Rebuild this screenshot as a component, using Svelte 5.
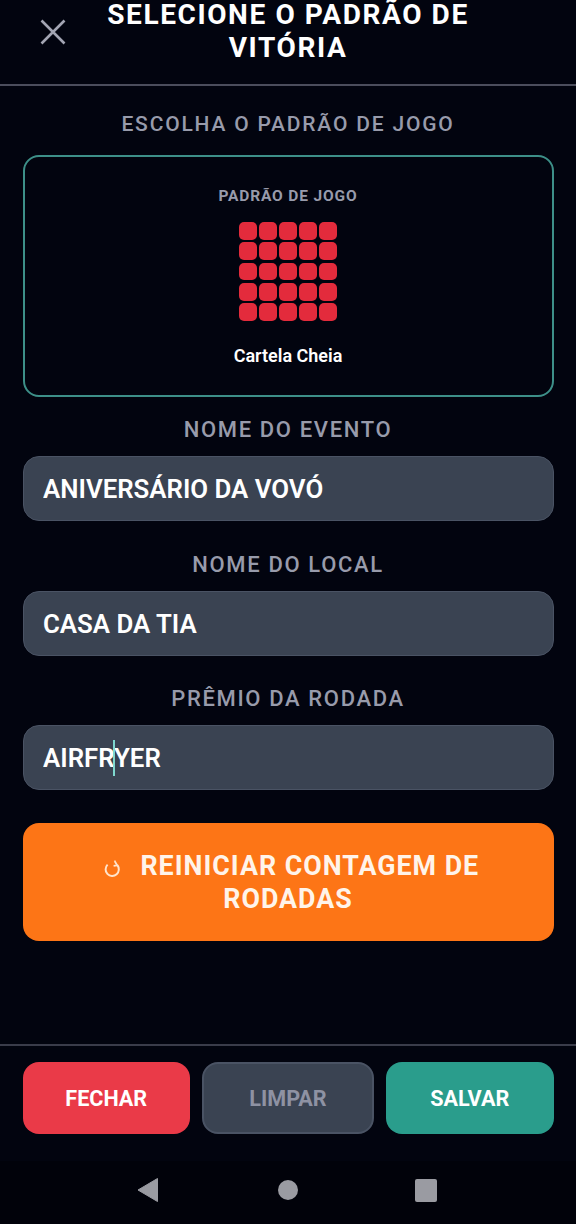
<script>
  const cells = Array.from({ length: 25 }, (_, i) => i);
  const fields = [
    { label: 'NOME DO EVENTO', value: 'ANIVERSÁRIO DA VOVÓ' },
    { label: 'NOME DO LOCAL', value: 'CASA DA TIA' },
    { label: 'PRÊMIO DA RODADA', value: 'AIRFRYER', caret: true }
  ];
</script>

<div class="screen">
  <header class="header">
    <button class="close" aria-label="Fechar">
      <svg viewBox="0 0 28 28" width="28" height="28"><path d="M2.5 2.5 25.5 25.5M25.5 2.5 2.5 25.5" fill="none" stroke="#a3a5b3" stroke-width="2.6" /></svg>
    </button>
    <h1 class="title">SELECIONE O PADRÃO DE VITÓRIA</h1>
  </header>

  <main class="content">
    <h2 class="label first">ESCOLHA O PADRÃO DE JOGO</h2>
    <section class="card">
      <div class="card-title">PADRÃO DE JOGO</div>
      <div class="grid">
        {#each cells as c (c)}<span class="cell"></span>{/each}
      </div>
      <div class="card-name">Cartela Cheia</div>
    </section>

    {#each fields as f (f.label)}
      <div class="field">
        <div class="label">{f.label}</div>
        <div class="input-wrap">
          <input class="input" value={f.value} readonly />
          {#if f.caret}<span class="caret"></span>{/if}
        </div>
      </div>
    {/each}

    <button class="reset">
      <span class="reset-text">
        <svg class="reset-icon" viewBox="0 0 18 18" width="18" height="18"><path d="M4.6 4.6A6.6 6.6 0 1 0 14.2 5" fill="none" stroke="#ffe4cc" stroke-width="2" /><path d="M11.6 1 14.2 5.4 10.6 5.9M11.6 1 12.2 1" fill="none" stroke="#ffe4cc" stroke-width="1.8" /></svg>
        REINICIAR CONTAGEM DE RODADAS
      </span>
    </button>
  </main>

  <footer class="footer">
    <button class="btn red">FECHAR</button>
    <button class="btn gray">LIMPAR</button>
    <button class="btn green">SALVAR</button>
  </footer>

  <nav class="navbar">
    <svg viewBox="0 0 22 26" width="22" height="26"><path d="M20.5 1.5V24.5L1 13Z" fill="#9a9ba2" stroke="#9a9ba2" stroke-linejoin="round" stroke-width="1" /></svg>
    <span class="dot"></span>
    <span class="square"></span>
  </nav>
</div>

<style>
  :global(body) {
    margin: 0;
    background: #02040f;
  }
  .screen {
    width: 576px;
    height: 1224px;
    overflow: hidden;
    display: flex;
    flex-direction: column;
    background: #02040f;
    font-family: Roboto, "Liberation Sans", sans-serif;
    color: #fff;
  }
  .header {
    box-sizing: border-box;
    height: 86px;
    flex: none;
    display: grid;
    grid-template-columns: 96px 1fr 96px;
    align-items: center;
    padding-bottom: 20px;
    border-bottom: 2px solid #4b4d5c;
  }
  .close {
    grid-column: 1;
    grid-row: 1;
    background: none;
    border: 0;
    padding: 0 0 0 39px;
    margin: 0;
    height: 28px;
    display: flex;
    justify-content: flex-start;
  }
  .title {
    grid-column: 2;
    margin: -2px 0 0;
    font-size: 28px;
    line-height: 33px;
    font-weight: 700;
    letter-spacing: 1.6px;
    text-align: center;
  }
  .content {
    flex: 1;
    padding: 0 22.5px;
    display: flex;
    flex-direction: column;
  }
  .label {
    margin: 0;
    font-size: 22px;
    line-height: 24px;
    font-weight: 500;
    letter-spacing: 1.65px;
    text-align: center;
    color: #989bab;
  }
  .first {
    margin-top: 26px;
    font-size: 21px;
    letter-spacing: 1.8px;
  }
  .card {
    box-sizing: border-box;
    margin-top: 19px;
    height: 242px;
    border: 2px solid #3d8f88;
    border-radius: 16px;
    display: flex;
    flex-direction: column;
    align-items: center;
    padding-top: 30px;
  }
  .card-title {
    font-size: 15.5px;
    line-height: 18px;
    font-weight: 700;
    letter-spacing: 0.85px;
    color: #989bab;
  }
  .grid {
    margin-top: 17px;
    display: grid;
    grid-template-columns: repeat(5, 1fr);
    grid-template-rows: repeat(5, 1fr);
    gap: 2.4px;
    width: 98px;
    height: 99px;
  }
  .cell {
    background: #e32b3c;
    border-radius: 5px;
  }
  .card-name {
    margin-top: 25px;
    font-size: 18px;
    line-height: 20px;
    font-weight: 600;
  }
  .field {
    margin-top: 31.5px;
    display: flex;
    flex-direction: column;
    gap: 14px;
  }
  .field:first-of-type {
    margin-top: 21px;
  }
  .input-wrap {
    position: relative;
  }
  .input {
    box-sizing: border-box;
    display: block;
    width: 100%;
    height: 65px;
    padding: 1px 19.5px 0;
    background: #3a4352;
    border: 1px solid #4a5364;
    border-radius: 16px;
    outline: none;
    color: #fff;
    font-family: inherit;
    font-size: 25.8px;
    font-weight: 600;
  }
  .caret {
    position: absolute;
    left: 90px;
    top: 15px;
    width: 2px;
    height: 36px;
    background: #7fd8cf;
  }
  .reset {
    margin-top: 33px;
    box-sizing: border-box;
    height: 118px;
    background: #fd7516;
    border: 0;
    border-radius: 16px;
    padding: 2px 48px 0;
    color: #fff4ea;
    font-family: inherit;
    font-size: 26.8px;
    line-height: 33px;
    font-weight: 700;
    letter-spacing: 1px;
    text-align: center;
  }
  .reset-icon {
    vertical-align: -3px;
    margin: 0 12px 0 6px;
  }
  .footer {
    flex: none;
    box-sizing: border-box;
    height: 117px;
    border-top: 2px solid #3a3c4a;
    padding: 16px 22.5px 0;
    display: grid;
    grid-template-columns: 1fr 172px 1fr;
    gap: 12px;
    align-items: start;
  }
  .btn {
    height: 72px;
    border: 0;
    border-radius: 16px;
    font-family: inherit;
    font-size: 21.6px;
    font-weight: 700;
  }
  .red {
    background: #ea3a48;
    color: #fff;
  }
  .gray {
    background: #3a4352;
    border: 2px solid #4a5364;
    color: #8e92a3;
  }
  .green {
    background: #2a9d8c;
    color: #fff;
  }
  .navbar {
    flex: none;
    box-sizing: border-box;
    height: 63px;
    background: #01020a;
    padding: 0 139px 5px 137px;
    display: flex;
    align-items: center;
    justify-content: space-between;
  }
  .dot {
    width: 20px;
    height: 20px;
    border-radius: 50%;
    background: #9a9ba2;
    margin-left: 2px;
  }
  .square {
    width: 22px;
    height: 23px;
    border-radius: 2px;
    background: #9a9ba2;
  }
</style>
